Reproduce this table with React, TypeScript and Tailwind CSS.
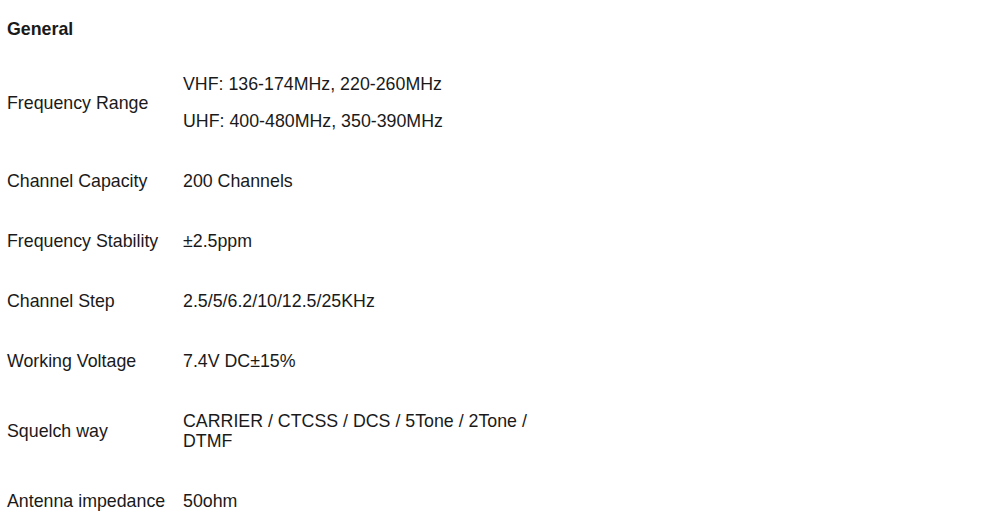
const specs: { label: string; values: string[] }[] = [
  { label: "Frequency Range", values: ["VHF: 136-174MHz, 220-260MHz", "UHF: 400-480MHz, 350-390MHz"] },
  { label: "Channel Capacity", values: ["200 Channels"] },
  { label: "Frequency Stability", values: ["±2.5ppm"] },
  { label: "Channel Step", values: ["2.5/5/6.2/10/12.5/25KHz"] },
  { label: "Working Voltage", values: ["7.4V DC±15%"] },
  { label: "Squelch way", values: ["CARRIER / CTCSS / DCS / 5Tone / 2Tone / DTMF"] },
  { label: "Antenna impedance", values: ["50ohm"] },
];

export default function App() {
  return (
    <div className="w-[1000px] h-[532px] overflow-hidden bg-white text-[#1a1a1a] text-[17.8px] leading-5 font-['Liberation_Sans',Arial,sans-serif] pt-[19px]">
      <h3 className="pl-[7px] font-bold h-5">General</h3>
      <div className="mt-[15px]">
        {specs.map((s) => (
          <div key={s.label} className="flex items-center py-5">
            <div className="w-[183px] pl-[7px] shrink-0">{s.label}</div>
            <div className="w-[370px] flex flex-col gap-[17px]">
              {s.values.map((v) => (
                <p key={v}>{v}</p>
              ))}
            </div>
          </div>
        ))}
      </div>
    </div>
  );
}
